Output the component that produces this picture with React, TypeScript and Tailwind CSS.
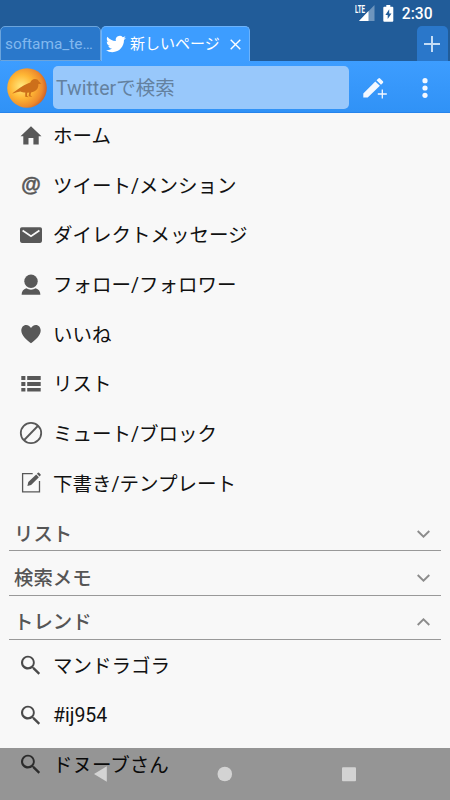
import type { ReactNode } from "react";

interface MenuItem {
  label: string;
  icon: ReactNode;
}

const searchIcon = (
  <path
    d="M15.3 14.3h-.8l-.3-.3a6.9 6.9 0 1 0-.9.9l.3.3v.8l5.9 5.7 1.6-1.6zM9 14.3a4.9 4.9 0 1 1 0-9.8 4.9 4.9 0 0 1 0 9.8z"
    className="fill-[#4a4a4a]"
  />
);

const menu: MenuItem[] = [
  { label: "ホーム", icon: <path d="M12 2.2 1.5 12.3h2.8v8.2h5.2V14h4.9v6.5h5.3v-8.2h2.8z" /> },
  {
    label: "ツイート/メンション",
    icon: (
      <text
        x="12"
        y="17.6"
        textAnchor="middle"
        stroke="#585858"
        strokeWidth="0.5"
        className="font-['Liberation_Sans',sans-serif] text-[20px] font-bold"
      >
        @
      </text>
    ),
  },
  {
    label: "ダイレクトメッセージ",
    icon: (
      <>
        <rect x="1" y="4.3" width="22" height="15.6" rx="1.8" />
        <path d="m3.6 7.5 8.4 5.7 8.4-5.7" fill="none" stroke="#f8f8f8" strokeWidth="1.8" />
      </>
    ),
  },
  {
    label: "フォロー/フォロワー",
    icon: (
      <>
        <circle cx="12" cy="8.3" r="6.7" />
        <path d="M2.6 21.8c0-3.6 1.8-5.6 4.7-6.6 2.8 1.9 6.6 1.9 9.4 0 2.9 1 4.7 3 4.7 6.6z" />
      </>
    ),
  },
  {
    label: "いいね",
    icon: <path d="M12 21.2C7.5 18.3 2.3 13.4 2.3 8.6c0-3.4 2.1-5.7 4.8-5.7 2.3 0 4.1 1.3 4.9 3.2.8-1.9 2.6-3.2 4.9-3.2 2.7 0 4.8 2.3 4.8 5.7 0 4.8-5.2 9.7-9.7 12.6z" />,
  },
  {
    label: "リスト",
    icon: <path d="M2.3 4h4.1v3.9H2.3zM8.2 4h13.5v3.9H8.2zM2.3 9.9h4.1v4H2.3zM8.2 9.9h13.5v4H8.2zM2.3 15.9h4.1v3.7H2.3zM8.2 15.9h13.5v3.7H8.2z" />,
  },
  {
    label: "ミュート/ブロック",
    icon: (
      <g fill="none" stroke="#585858" strokeWidth="1.8">
        <circle cx="12" cy="12" r="10.2" />
        <path d="M5.2 19 18.8 5" />
      </g>
    ),
  },
  {
    label: "下書き/テンプレート",
    icon: (
      <>
        <path d="M13.7 2.7H3.6v18.1h16.9V10" fill="none" stroke="#585858" strokeWidth="1.3" />
        <path d="m8.4 14.9.9-3.8 7.9-7.7 2.7 2.8-7.8 7.7zM17.9 2.7l1-.9q.6-.4 1.1 0l1.5 1.5q.5.6 0 1.2l-.9.9z" />
      </>
    ),
  },
];

const sections = [
  { label: "リスト", open: false },
  { label: "検索メモ", open: false },
  { label: "トレンド", open: true },
];

const trends = ["マンドラゴラ", "#ij954", "ドヌーブさん"];

function Row({ label, icon }: MenuItem) {
  return (
    <li className="flex h-[49.65px] items-center pl-[18.5px]">
      <svg viewBox="0 0 24 24" className="mb-px size-6 shrink-0 overflow-visible fill-[#585858]">
        {icon}
      </svg>
      <span className="ml-[10.5px] whitespace-nowrap pt-[2px] text-[19.5px] leading-7 text-[#111]">{label}</span>
    </li>
  );
}

function StatusBar() {
  return (
    <div className="flex h-[26px] items-center justify-end pr-[17.5px] text-white">
      <svg width="20" height="17" viewBox="0 0 20 17" className="mr-[8.5px]">
        <path d="M19.5 0v16H4z" fill="#6e95bd" />
        <path d="M13.5 6v10H4z" fill="#fff" />
        <path d="M0 0h11v8.5H0z" fill="#215c99" />
        <text x="0" y="7.7" textLength="10" lengthAdjust="spacingAndGlyphs" fill="#fff" className="text-[10px] font-bold">
          LTE
        </text>
      </svg>
      <svg width="11" height="17" viewBox="0 0 11 17" className="mr-[7.5px]">
        <path d="M3.3 0h4v1.8h2q1 0 1 1v13q0 1-1 1h-8q-1 0-1-1v-13q0-1 1-1h2z" fill="#fff" />
        <path d="M6.2 4.2 2.4 9.9h2.3v4.2l3.8-5.7H6.2z" fill="#215c99" />
      </svg>
      <span className="pt-[2px] text-[15.6px] font-medium leading-5">2:30</span>
    </div>
  );
}

function Tabs() {
  return (
    <div className="flex h-[35px] items-stretch">
      <div className="flex w-[101px] items-center rounded-t-[5px] border border-[#6ba4dc] bg-[#2a78cb] pl-1 pt-[2px] text-[15.4px] text-[#82b8ef]">
        softama_te…
      </div>
      <div className="flex w-[149px] items-center rounded-t-[5px] border border-b-0 border-[#6db3fb] bg-[#3d9dff] pl-1 text-white">
        <svg width="20" height="20" viewBox="0 0 24 24" fill="currentColor">
          <path d="M23.95 4.57a10 10 0 0 1-2.82.77 4.96 4.96 0 0 0 2.16-2.72c-.95.55-2 .96-3.13 1.18a4.92 4.92 0 0 0-8.38 4.48C7.69 8.1 4.07 6.13 1.64 3.16a4.82 4.82 0 0 0-.67 2.48c0 1.71.87 3.21 2.19 4.1a4.9 4.9 0 0 1-2.23-.62v.06a4.92 4.92 0 0 0 3.95 4.83 5 5 0 0 1-2.21.08 4.94 4.94 0 0 0 4.6 3.42A9.87 9.87 0 0 1 0 19.54a13.99 13.99 0 0 0 7.55 2.21c9.05 0 14-7.5 14-13.98 0-.21 0-.42-.02-.63a9.94 9.94 0 0 0 2.42-2.57z" />
        </svg>
        <span className="ml-1 w-[91px] whitespace-nowrap pt-px text-[15px]">新しいページ</span>
        <svg width="11" height="11" viewBox="0 0 11 11" className="ml-[9px]" stroke="currentColor" strokeWidth="1.4">
          <path d="m.7.7 9.6 9.6M10.3.7.7 10.3" />
        </svg>
      </div>
      <div className="ml-auto mr-[2px] flex w-[31px] items-center justify-center rounded-t-[5px] bg-[#2a77ca]">
        <svg width="16" height="16" viewBox="0 0 16 16" className="mr-px" stroke="#c4dcf5" strokeWidth="2">
          <path d="M8 0v16M0 8h16" />
        </svg>
      </div>
    </div>
  );
}

function Toolbar() {
  return (
    <div className="flex h-[52px] items-center border-b border-[#2684ec] bg-gradient-to-b from-[#3d9dff] to-[#3092f6] pt-[2px]">
      <svg width="40" height="40" viewBox="0 0 40 40" className="ml-[6.5px]">
        <defs>
          <radialGradient id="orb" cx="0.36" cy="0.46" r="0.66">
            <stop offset="0" stopColor="#ffea80" />
            <stop offset="0.45" stopColor="#ffb735" />
            <stop offset="0.8" stopColor="#ed8a2c" />
            <stop offset="1" stopColor="#c95c27" />
          </radialGradient>
        </defs>
        <circle cx="20" cy="20" r="19.8" fill="url(#orb)" />
        <path
          d="M5.4 25.2C8.5 22.6 12 20.4 15 18.4c2.7-1.8 5.8-2.8 8.3-3.9.8-2.2 2.5-3.4 4.7-3.4 1.9 0 3.2.8 3.7 2.2l2.7 2.4-3 .2c.1 2.6-.5 4.3-1.9 5.9-1.4 1.5-3.3 2.3-5.4 2.7l-.7 2.7 1.8 1.7-3.6-.6.6-3.7-2 .1-.2 3 1.6 1.5-3.4-.5.1-4.1c-1.9-.1-3.3-.6-4.8-1.2-2.5.4-5 1.1-7.7 2.2z"
          fill="#cd6f1a"
        />
      </svg>
      <div className="ml-[6.5px] flex h-[43.5px] w-[296px] items-center rounded-[5px] bg-[#98c8fb] pl-[3px] pt-[2px] text-[19.5px] text-[#64819f]">
        Twitterで検索
      </div>
      <svg width="25" height="24" viewBox="0 0 25 24" className="ml-[13.5px]" fill="#f3f8ff">
        <path d="M.3 17.4v4.2h4.4L16.9 9.8l-4.6-4.4zM13.5 4.3l1.9-1.8q.9-.8 1.7 0l2.8 2.7q.8.8 0 1.7L18 8.7z" />
        <path d="M19.3 13.5v9M14.8 18h9" stroke="#f3f8ff" strokeWidth="1.3" />
      </svg>
      <svg width="6" height="20" viewBox="0 0 6 20" className="ml-[34px]" fill="#f3f8ff">
        <circle cx="3" cy="2.7" r="2.6" />
        <circle cx="3" cy="10" r="2.6" />
        <circle cx="3" cy="17.3" r="2.6" />
      </svg>
    </div>
  );
}

export default function App() {
  return (
    <div className="relative h-[800px] w-[450px] overflow-hidden bg-[#f8f8f8] font-[Roboto,'Noto_Sans_CJK_JP',sans-serif]">
      <header className="relative z-10 bg-[#215c99]">
        <StatusBar />
        <Tabs />
        <Toolbar />
      </header>

      <main className="-mt-[1.7px]">
        <ul>
          {menu.map((item) => (
            <Row key={item.label} {...item} />
          ))}
        </ul>

        <div className="-mt-[1.3px] mb-px">
          {sections.map(({ label, open }) => (
            <div
              key={label}
              className="mx-[9px] flex h-[44.2px] items-center justify-between border-b border-[#999] pl-[5px] pr-[11px] pt-[10px]"
            >
              <h2 className="pt-[2px] text-[19.4px] font-medium leading-7 text-[#555]">{label}</h2>
              <svg width="13" height="8" viewBox="0 0 13 8" fill="none" stroke="#8c8c8c" strokeWidth="1.9">
                <path d={open ? "M.7 7 6.5 1.3 12.3 7" : "M.7 1 6.5 6.7 12.3 1"} />
              </svg>
            </div>
          ))}
        </div>

        <ul>
          {trends.map((label) => (
            <Row key={label} label={label} icon={searchIcon} />
          ))}
        </ul>
      </main>

      {/* Translucent system navigation over the list */}
      <nav className="absolute inset-x-0 bottom-0 h-[52.5px] bg-black/40">
        <svg width="450" height="52" viewBox="0 0 450 52" fill="#d3d3d3">
          <path d="M106.8 18.3v15.5L94 26z" />
          <circle cx="224.8" cy="26" r="7.3" />
          <rect x="342" y="19.2" width="14" height="14" rx="1" />
        </svg>
      </nav>
    </div>
  );
}
